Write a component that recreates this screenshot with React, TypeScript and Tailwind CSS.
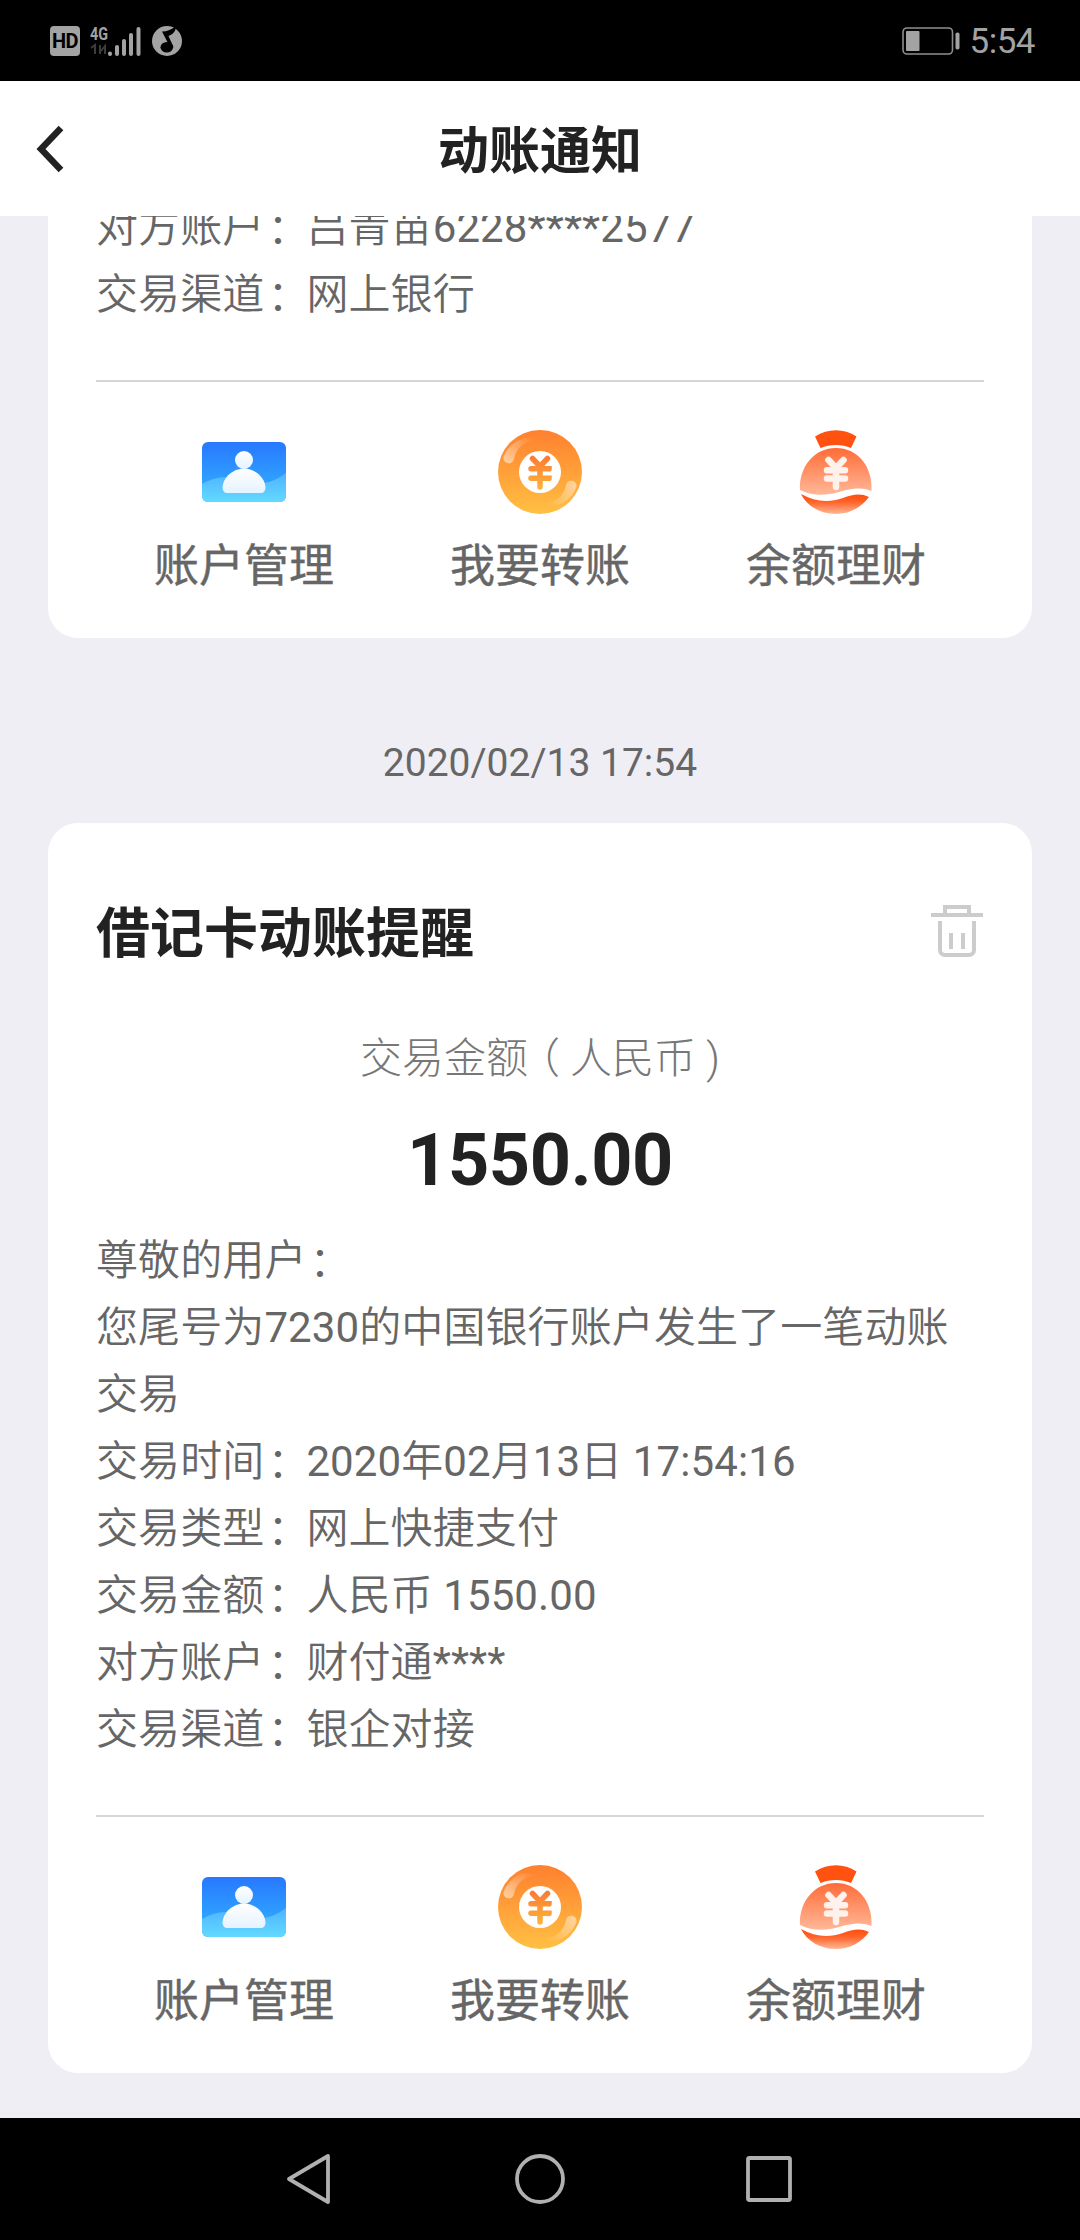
import type { ReactNode } from 'react';

const detailRows = [
  { label: '交易时间', value: '2020年02月13日 17:54:16' },
  { label: '交易类型', value: '网上快捷支付' },
  { label: '交易金额', value: '人民币 1550.00' },
  { label: '对方账户', value: '财付通****' },
  { label: '交易渠道', value: '银企对接' },
];

const previousRows = [
  { label: '对方账户', value: '吕青苗6228****2577' },
  { label: '交易渠道', value: '网上银行' },
];

function StatusBar() {
  return (
    <div className="flex h-[81px] shrink-0 items-center justify-between bg-black pl-[50px] pr-[45px]">
      <div className="flex items-center">
        <div className="flex h-[30px] w-[30px] items-center justify-center rounded-[4px] bg-[#a3a3a3] text-[20px] font-bold leading-none tracking-[-0.5px] text-black">
          HD
        </div>
        <svg className="ml-[10px]" width="52" height="34" viewBox="0 0 52 34">
          <text x="0" y="16" fontSize="19" fontWeight="700" fill="#a3a3a3" textLength="18" lengthAdjust="spacingAndGlyphs">
            4G
          </text>
          <path d="M1 24l4-3v9M10 21v9M15 30v-8l-4 5" fill="none" stroke="#3c3c3c" strokeWidth="2" />
          <g stroke="#a3a3a3" strokeWidth="4" strokeLinecap="round">
            <path d="M20 29.500v.5" />
            <path d="M27 23v7" />
            <path d="M34 17v13" />
            <path d="M41 11v19" />
            <path d="M48.500 5v25" />
          </g>
        </svg>
        <svg className="ml-[9px]" width="32" height="32" viewBox="0 0 32 32">
          <circle cx="16" cy="16" r="15" fill="#a3a3a3" />
          <path d="M11 6.500c5 0 10-2 14-5.500 0 5-3 8.500-7.500 10L22.500 22H19z" fill="#000" />
          <ellipse cx="15.800" cy="22.300" rx="6.300" ry="5.300" fill="#000" />
        </svg>
      </div>
      <div className="flex items-center">
        <svg width="58" height="28" viewBox="0 0 58 28">
          <rect x="1" y="1" width="49.500" height="26" rx="4" fill="none" stroke="#8f8f8f" strokeWidth="1.600" />
          <rect x="4" y="4" width="13.500" height="20" rx="1" fill="#a3a3a3" />
          <rect x="53.500" y="5.500" width="4" height="17" rx="1.800" fill="#a3a3a3" />
        </svg>
        <span className="ml-[10px] pt-[2px] text-[35px] leading-none tracking-[-0.5px] text-[#a3a3a3]">5:54</span>
      </div>
    </div>
  );
}

function Header() {
  return (
    <header className="grid h-[135px] shrink-0 grid-cols-[1fr_auto_1fr] items-center bg-white">
      <svg className="ml-[34px]" width="34" height="52" viewBox="0 0 34 52" fill="none" stroke="#222" strokeWidth="6.500">
        <path d="M27 5L7 26l20 21" />
      </svg>
      <h1 className="pt-[6px] text-[51px] font-bold leading-none text-[#222]">动账通知</h1>
    </header>
  );
}

function AccountIcon() {
  return (
    <svg width="84" height="84" viewBox="0 0 84 84">
      <defs>
        <linearGradient id="account-bg" x1="0" y1="0" x2="0" y2="1">
          <stop offset="0" stopColor="#2878ff" />
          <stop offset="1" stopColor="#33b6ff" />
        </linearGradient>
        <linearGradient id="account-wave" x1="0" y1="0" x2="0" y2="1">
          <stop offset="0" stopColor="#4fb2ff" />
          <stop offset="1" stopColor="#62daff" />
        </linearGradient>
        <linearGradient id="account-user" x1="0" y1="0" x2="0" y2="1">
          <stop offset="0" stopColor="#fff" />
          <stop offset="1" stopColor="#e4f3ff" />
        </linearGradient>
      </defs>
      <rect y="12" width="84" height="60" rx="6" fill="url(#account-bg)" />
      <path d="M0 54c12-7 24-9 36-5 14 5 30 8 48-6v23a6 6 0 0 1-6 6H6a6 6 0 0 1-6-6z" fill="url(#account-wave)" />
      <circle cx="42" cy="30" r="9" fill="url(#account-user)" />
      <path d="M42 38.500c11 0 21 9 21.500 19 0 3.500-2 5.500-5 5.500h-33c-3 0-5-2-5-5.500.5-10 10.500-19 21.500-19z" fill="url(#account-user)" />
    </svg>
  );
}

function TransferIcon() {
  return (
    <svg width="84" height="84" viewBox="0 0 84 84">
      <defs>
        <linearGradient id="coin-bg" x1="0" y1="0" x2="0" y2="1">
          <stop offset="0" stopColor="#ff802f" />
          <stop offset="1" stopColor="#ffc043" />
        </linearGradient>
        <linearGradient id="coin-yen" gradientUnits="userSpaceOnUse" x1="0" y1="26" x2="0" y2="60">
          <stop offset="0" stopColor="#fb7a34" />
          <stop offset="1" stopColor="#ffb438" />
        </linearGradient>
        <linearGradient id="coin-shine" x1="0" y1="1" x2="1" y2="0">
          <stop offset="0" stopColor="#fff" stopOpacity="0.55" />
          <stop offset="1" stopColor="#fff" stopOpacity="0" />
        </linearGradient>
      </defs>
      <circle cx="42" cy="42" r="42" fill="url(#coin-bg)" />
      <path d="M5.500 27C10 16 19 8 34 7v4C24 13 18 19 16 29a5.300 5.300 0 0 1-10.500-2z" fill="url(#coin-shine)" />
      <path d="M5.500 27C10 16 19 8 34 7v4C24 13 18 19 16 29a5.300 5.300 0 0 1-10.500-2z" fill="url(#coin-shine)" transform="rotate(180 42 42)" />
      <circle cx="42" cy="42" r="21" fill="#fff" />
      <g fill="none" stroke="url(#coin-yen)" strokeWidth="5.500" strokeLinecap="round">
        <path d="M34.500 28.500l7.500 8 7.500-8M42 36.500v20.500" />
        <path d="M33 38.800h18v.1M33 48.300h18v.1" />
      </g>
    </svg>
  );
}

function BagIcon() {
  return (
    <svg width="84" height="84" viewBox="0 0 84 84">
      <defs>
        <linearGradient id="bag-body" x1="0" y1="0" x2="0" y2="1">
          <stop offset="0" stopColor="#ff6c38" />
          <stop offset="1" stopColor="#ffb898" />
        </linearGradient>
        <linearGradient id="bag-base" x1="0" y1="0" x2="0" y2="1">
          <stop offset="0" stopColor="#ff4c0c" />
          <stop offset="0.400" stopColor="#ff6429" />
          <stop offset="1" stopColor="#ffb797" />
        </linearGradient>
      </defs>
      <path d="M21 6.500C34-2 50-2 62.500 6.500L57 18c-9-4-21-4-30.500 0z" fill="#ff510f" />
      <path d="M6 60C5 37 20 18 42 18s37 19 35.500 43C68 57 58 58 45 62c-14 4-26 4-39-2z" fill="url(#bag-body)" />
      <path d="M7 64c14 8 28 9 42 4 10-4 18-5 26-1C67 78 55 84 42 84 26 84 13 76 7 64z" fill="url(#bag-base)" />
      <g fill="none" stroke="#fff1eb" strokeWidth="6.500" strokeLinecap="round">
        <path d="M34.500 30l7.500 8 7.500-8M42 38v19" />
        <path d="M33 40.300h18M33 48.500h18" />
      </g>
    </svg>
  );
}

function TrashIcon() {
  return (
    <svg className="mt-[4px]" width="54" height="54" viewBox="0 0 54 54" fill="none" stroke="#ccc" strokeWidth="4">
      <path d="M1 12h52M15 12V4h24v8" />
      <path d="M10 18v29a5 5 0 0 0 5 5h24a5 5 0 0 0 5-5V18M21 30v16M33 30v16" />
    </svg>
  );
}

// Fullwidth colon, nudged towards the middle of its cell
function Colon() {
  return <span className="inline-block w-[42px] indent-[3px] align-[-2px] leading-none">：</span>;
}

function Row({ label, value }: { label: string; value: string }) {
  return (
    <p>
      {label}
      <Colon />
      {value}
    </p>
  );
}

function MessageBody({ children }: { children: ReactNode }) {
  return (
    <div className="shrink-0 text-[42px] leading-[67px] tracking-[0.1px] text-[#666] font-[Roboto,'Noto_Sans_CJK_SC_DemiLight','Noto_Sans_CJK_SC',sans-serif]">
      {children}
    </div>
  );
}

function Action({ icon, label }: { icon: ReactNode; label: string }) {
  return (
    <div className="flex flex-col items-center">
      {icon}
      <span className="mt-[30px] text-[45px] leading-[46px] text-[#666] [-webkit-text-stroke:0.4px_#666]">{label}</span>
    </div>
  );
}

function Actions() {
  return (
    <div className="mt-[52px] grid h-[258px] shrink-0 grid-cols-3 border-t-2 border-[#d6d6d6] pt-[48px]">
      <Action icon={<AccountIcon />} label="账户管理" />
      <Action icon={<TransferIcon />} label="我要转账" />
      <Action icon={<BagIcon />} label="余额理财" />
    </div>
  );
}

function NavBar() {
  return (
    <nav className="flex h-[122px] shrink-0 items-center justify-center gap-[178px] bg-black">
      <svg width="52" height="52" viewBox="0 0 52 52" fill="none" stroke="#b0b0b0" strokeWidth="3.800" strokeLinejoin="round">
        <path d="M44 3v46L5 26z" />
      </svg>
      <svg width="52" height="52" viewBox="0 0 52 52" fill="none" stroke="#b0b0b0" strokeWidth="3.800">
        <circle cx="26" cy="26" r="23" />
      </svg>
      <svg width="52" height="52" viewBox="0 0 52 52" fill="none" stroke="#b0b0b0" strokeWidth="3.800">
        <rect x="4" y="5" width="42" height="42" rx="1.500" />
      </svg>
    </nav>
  );
}

export default function App() {
  return (
    <div className="flex h-[2240px] w-[1080px] flex-col overflow-hidden bg-[#efeef5] font-[Roboto,'Noto_Sans_CJK_SC',sans-serif]">
      <StatusBar />
      <Header />

      <main className="flex min-h-0 flex-1 flex-col px-12">
        {/* Tail of the previous message, scrolled under the header */}
        <section className="flex h-[422px] shrink-0 flex-col justify-end overflow-hidden rounded-b-[30px] bg-white px-12">
          <MessageBody>
            {previousRows.map((row) => (
              <Row key={row.label} {...row} />
            ))}
          </MessageBody>
          <Actions />
        </section>

        <time className="mt-[102px] text-center text-[39px] leading-[46px] text-[#666]">2020/02/13 17:54</time>

        <section className="mt-[37px] flex h-[1250px] shrink-0 flex-col rounded-[30px] bg-white px-12 pt-[76px]">
          <div className="flex h-[66px] items-start justify-between">
            <h2 className="pt-[9px] text-[54px] font-bold leading-none text-[#222]">借记卡动账提醒</h2>
            <TrashIcon />
          </div>
          <p className="mt-[60px] text-center text-[42px] font-light leading-[67px] text-[#777]">
            交易金额
            <span className="inline-block w-[42px] pl-[11px] text-left leading-none [font-feature-settings:'halt']">（</span>
            人民币 )
          </p>
          <p className="mt-[27px] text-center text-[72px] font-bold leading-[84px] tracking-[-0.4px] text-[#222]">1550.00</p>
          <div className="mt-auto" />
          <MessageBody>
            <p>
              尊敬的用户
              <Colon />
            </p>
            <p>您尾号为7230的中国银行账户发生了一笔动账交易</p>
            {detailRows.map((row) => (
              <Row key={row.label} {...row} />
            ))}
          </MessageBody>
          <Actions />
        </section>
      </main>

      <NavBar />
    </div>
  );
}
